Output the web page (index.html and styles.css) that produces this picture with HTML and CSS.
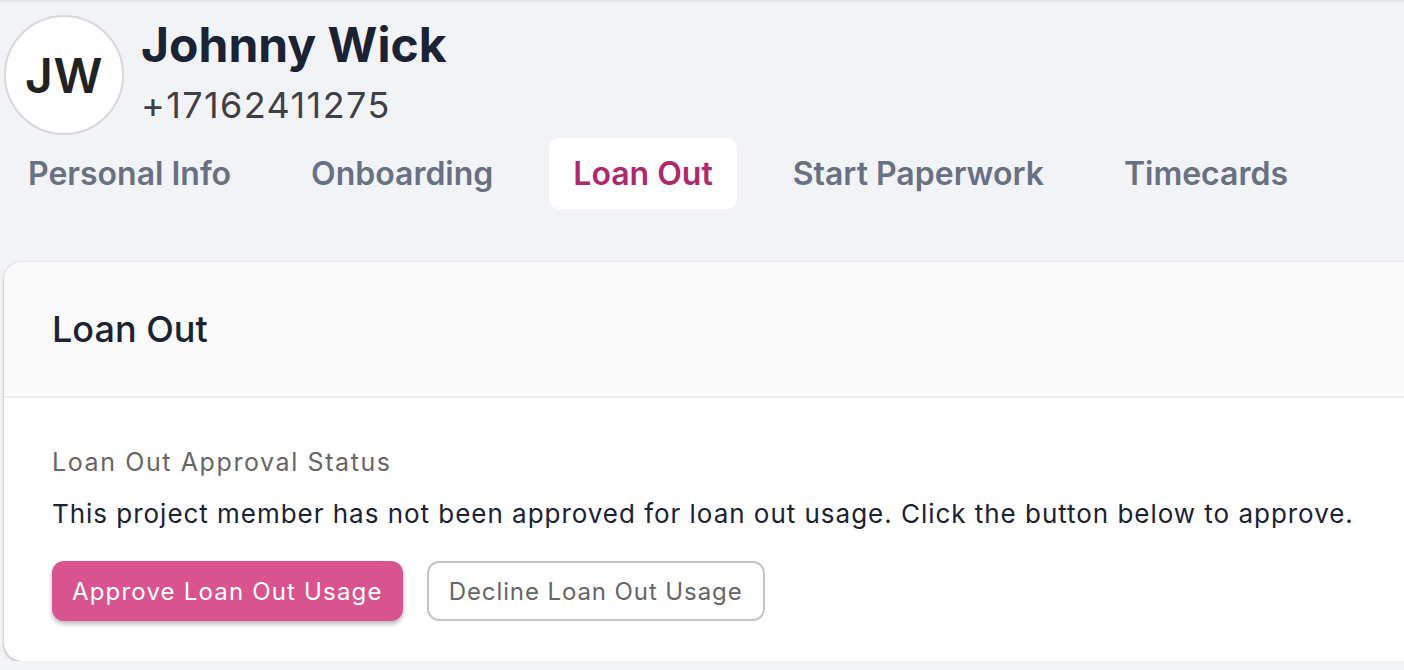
FILE: index.html
```html
<!DOCTYPE html>
<html lang="en">
<head>
<meta charset="utf-8">
<title>Johnny Wick - Loan Out</title>
<link rel="stylesheet" href="styles.css">
</head>
<body>
<div class="page">
  <header class="profile">
    <div class="avatar">JW</div>
    <div class="info">
      <div class="name">Johnny Wick</div>
      <div class="phone">+17162411275</div>
    </div>
  </header>
  <nav class="tabs">
    <a class="tab">Personal Info</a>
    <a class="tab">Onboarding</a>
    <a class="tab active">Loan Out</a>
    <a class="tab">Start Paperwork</a>
    <a class="tab">Timecards</a>
  </nav>
  <section class="card">
    <div class="card-header">
      <h2 class="card-title">Loan Out</h2>
    </div>
    <div class="card-body">
      <div class="label">Loan Out Approval Status</div>
      <p class="text">This project member has not been approved for loan out usage. Click the button below to approve.</p>
      <div class="actions">
        <button class="btn btn-primary">Approve Loan Out Usage</button>
        <button class="btn btn-outline">Decline Loan Out Usage</button>
      </div>
    </div>
  </section>
</div>
</body>
</html>
```
FILE: styles.css
```css
* { box-sizing: border-box; }
html, body {
  margin: 0;
  padding: 0;
  background: #f2f3f7;
  overflow: hidden;
}
body {
  font-family: Inter, "Liberation Sans", sans-serif;
  border-top: 2px solid #e6e7eb;
}
.page {
  width: 1440px;
  padding-left: 4px;
}
.profile {
  display: flex;
  align-items: flex-start;
  gap: 17px;
  padding-top: 13px;
}
.avatar {
  width: 120px;
  height: 120px;
  border-radius: 50%;
  border: 2px solid #d6d8dc;
  background: #ffffff;
  display: flex;
  align-items: center;
  justify-content: center;
  font-size: 48px;
  font-weight: 600;
  color: #222222;
  letter-spacing: 0.5px;
}
.info {
  padding-top: 1px;
}
.name {
  font-size: 48px;
  line-height: 58px;
  font-weight: 700;
  color: #1a2233;
}
.phone {
  margin-top: 9px;
  font-size: 36px;
  line-height: 44px;
  font-weight: 400;
  letter-spacing: 1.4px;
  color: #3f3f46;
}
.tabs {
  display: flex;
  gap: 32px;
  margin-top: 3px;
}
.tab {
  padding: 12px 24px;
  font-size: 32px;
  line-height: 47px;
  font-weight: 600;
  color: #687083;
  border-radius: 10px;
}
.tab.active {
  background: #ffffff;
  color: #b0286c;
}
.card {
  margin-top: 53px;
  background: #ffffff;
  border-radius: 18px 0 0 18px;
  box-shadow: 0 1px 3px rgba(0, 0, 0, 0.3), 0 0 1px rgba(0, 0, 0, 0.12);
  overflow: hidden;
}
.card-header {
  background: #fafafa;
  border-bottom: 2px solid #ececec;
  padding: 45px 48px;
}
.card-title {
  margin: 0;
  font-size: 36px;
  line-height: 44px;
  font-weight: 500;
  color: #1a2233;
}
.card-body {
  padding: 48px 48px 40px;
}
.label {
  font-size: 25px;
  line-height: 32px;
  letter-spacing: 1.6px;
  color: #666666;
}
.text {
  margin: 18px 0 0;
  font-size: 26px;
  line-height: 36px;
  letter-spacing: 0.97px;
  color: #1a2233;
}
.actions {
  display: flex;
  gap: 24px;
  margin-top: 29px;
}
.btn {
  height: 60px;
  padding: 0 20px;
  font-family: inherit;
  font-size: 24px;
  letter-spacing: 1.18px;
  border-radius: 12px;
}
.btn-primary {
  background: #d9548f;
  color: #ffffff;
  border: none;
  box-shadow: 0 3px 5px rgba(0, 0, 0, 0.28);
}
.btn-outline {
  background: #ffffff;
  color: #666666;
  border: 2px solid #c4c4c4;
  letter-spacing: 0.9px;
}
```
